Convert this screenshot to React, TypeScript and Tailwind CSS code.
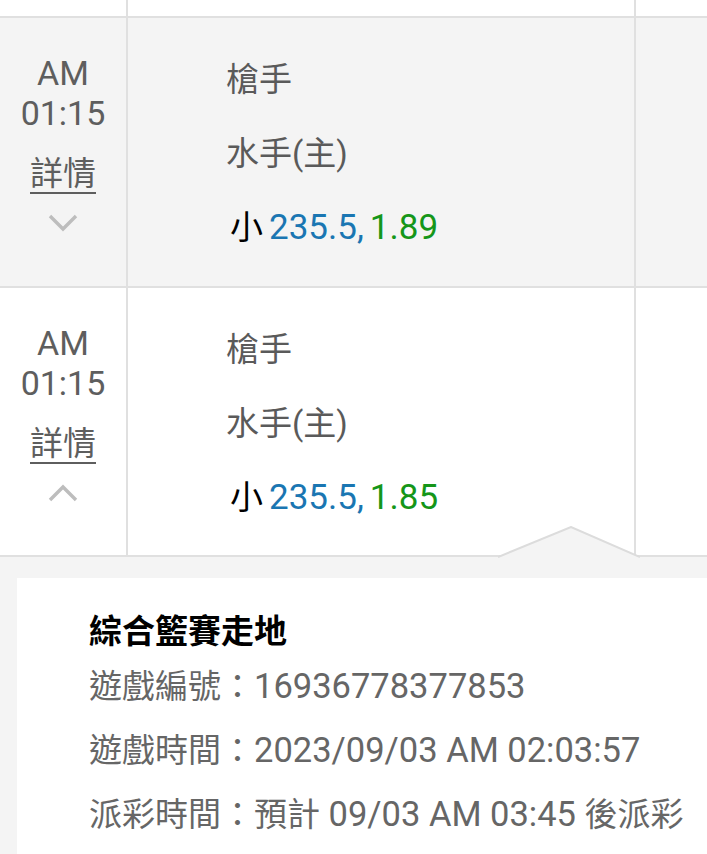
const FONT = "font-['Roboto','Noto_Sans_CJK_TC',sans-serif]";

type Bet = {
  time: string;
  away: string;
  home: string;
  line: string;
  odds: string;
  open: boolean;
  shaded: boolean;
};

const bets: Bet[] = [
  { time: "01:15", away: "槍手", home: "水手(主)", line: "235.5,", odds: "1.89", open: false, shaded: true },
  { time: "01:15", away: "槍手", home: "水手(主)", line: "235.5,", odds: "1.85", open: true, shaded: false },
];

function Chevron({ up }: { up: boolean }) {
  return (
    <svg width="30" height="18" viewBox="0 0 30 18" fill="none">
      <polyline
        points={up ? "2,16 15,3 28,16" : "2,2 15,15 28,2"}
        stroke="#bdbdbd"
        strokeWidth="3.4"
      />
    </svg>
  );
}

function BetRow({ bet, height }: { bet: Bet; height: string }) {
  return (
    <div
      className={`flex border-b-2 border-[#e0e0e0] ${height} ${
        bet.shaded ? "bg-[#f4f4f4]" : "bg-white"
      }`}
    >
      <div className="w-[128px] shrink-0 border-r-2 border-[#e0e0e0] flex flex-col items-center pt-[35px] text-[34px] text-[#5e5e5e]">
        <div className="leading-[40px]">AM</div>
        <div className="leading-[40px]">{bet.time}</div>
        <div className="mt-[21px] leading-[40px] text-[33px] underline underline-offset-[7px] decoration-2">
          詳情
        </div>
        <div className="mt-[20px]">
          <Chevron up={bet.open} />
        </div>
      </div>
      <div className="w-[508px] shrink-0 border-r-2 border-[#e0e0e0] pl-[98px] pt-[42px] flex flex-col gap-[34px] text-[33px] text-[#5a5a5a]">
        <div className="leading-[40px]">{bet.away}</div>
        <div className="leading-[40px]">{bet.home}</div>
        <div className="h-[40px] leading-[40px] pl-[4px] flex items-baseline">
          <span className="text-black">小</span>
          <span className="ml-[6px] text-[35px] text-[#1a76b2]">{bet.line}</span>
          <span className="ml-[6px] text-[35px] text-[#159619]">{bet.odds}</span>
        </div>
      </div>
      <div className="flex-1" />
    </div>
  );
}

function Cjk({ children }: { children: string }) {
  return <span className="text-[33px] leading-none">{children}</span>;
}

function Num({ children }: { children: string }) {
  return <span className="text-[34.5px] leading-none">{children}</span>;
}

export default function App() {
  return (
    <div className={`w-[707px] h-[854px] overflow-hidden bg-white flex flex-col ${FONT}`}>
      <div className="flex h-[18px] shrink-0 border-b-2 border-[#e0e0e0]">
        <div className="w-[128px] border-r-2 border-[#e0e0e0]" />
        <div className="w-[508px] border-r-2 border-[#e0e0e0]" />
        <div className="flex-1" />
      </div>

      <BetRow bet={bets[0]} height="h-[270px]" />
      <BetRow bet={bets[1]} height="h-[269px]" />

      <div className="relative flex-1 bg-[#f4f4f4] pl-[17px] pt-[21px] flex flex-col">
        <svg
          className="absolute left-[498px] top-[-31px]"
          width="142"
          height="33"
          viewBox="0 0 142 33"
        >
          <polygon points="0,33 0,31 73,1 142,31 142,33" fill="#f4f4f4" />
          <polyline points="0,31 73,1 142,31" fill="none" stroke="#dcdcdc" strokeWidth="2" />
        </svg>

        <div className="flex-1 bg-white pl-[72px] pt-[34px]">
          <div className="h-[40px] leading-[40px] text-[33px] font-bold text-black">綜合籃賽走地</div>
          <div className="mt-[17px] flex flex-col gap-[24px] text-[#666666]">
            <div className="h-[40px] leading-[40px] whitespace-nowrap">
              <Cjk>遊戲編號：</Cjk>
              <Num>16936778377853</Num>
            </div>
            <div className="h-[40px] leading-[40px] whitespace-nowrap">
              <Cjk>遊戲時間：</Cjk>
              <Num>2023/09/03 AM 02:03:57</Num>
            </div>
            <div className="h-[40px] leading-[40px] whitespace-nowrap">
              <Cjk>派彩時間：預計</Cjk>
              <Num> 09/03 AM 03:45 </Num>
              <Cjk>後派彩</Cjk>
            </div>
          </div>
        </div>
      </div>
    </div>
  );
}
